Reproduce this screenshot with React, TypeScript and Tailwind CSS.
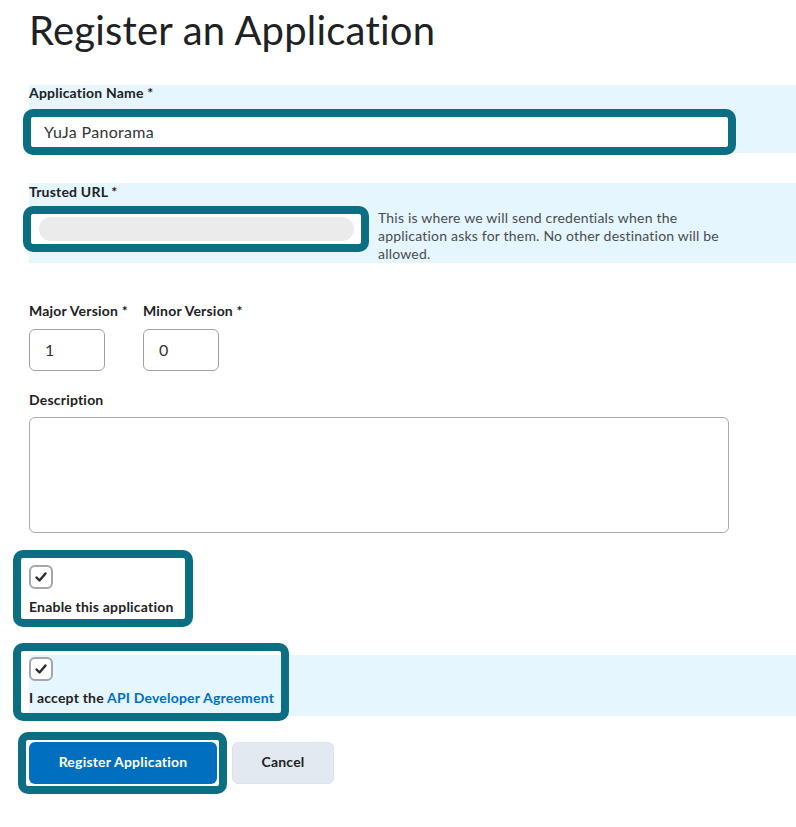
function Callout({ className }: { className: string }) {
  // teal annotation frame drawn over the control it highlights
  return (
    <span
      className={`pointer-events-none absolute rounded-[10px] border-[8px] border-[#0c6e82] ${className}`}
    />
  );
}

function Check() {
  return (
    <div className="flex h-[24px] w-[24px] items-center justify-center rounded-[6px] border-2 border-[#a3a6a9] bg-white">
      <svg width="16" height="16" viewBox="0 0 16 16" fill="none">
        <path
          d="M3.5 8.5l3 3L12.5 4.5"
          stroke="#2a2b2d"
          strokeWidth="2.4"
          strokeLinecap="round"
          strokeLinejoin="round"
        />
      </svg>
    </div>
  );
}

export default function App() {
  return (
    <div className="min-h-screen bg-white font-['Lato','Noto_Sans',sans-serif] text-[#202122]">
      <div className="pl-[29px]">
        <h1 className="mt-[6px] text-[40px] font-normal leading-[48px] tracking-[0.2px]">
          Register an Application
        </h1>

        {/* Application name */}
        <div className="mt-[31px] bg-[#e6f6fe] pb-[4px]">
          <label className="block text-[14px] font-bold leading-[16px] pb-[2px] tracking-[0.2px]">Application Name *</label>
          <div className="relative mt-[12px] h-[34px] w-[700px]">
            <div className="flex h-full items-center bg-white pl-[15px] text-[16px] tracking-[0.3px] text-[#333]">
              YuJa Panorama
            </div>
            <Callout className="-top-[6px] -left-[6px] -right-[7px] -bottom-[6px]" />
          </div>
        </div>

        {/* Trusted URL */}
        <div className="mt-[30px] bg-[#e6f6fe]">
          <label className="block text-[14px] font-bold leading-[18px] tracking-[0.2px]">Trusted URL *</label>
          <div className="mt-[8px] flex items-start">
            <div className="relative mt-[3px] h-[34px] w-[334px]">
              <div className="h-full bg-white pt-[5px] pl-[10px]">
                <div className="h-[24px] w-[315px] rounded-full bg-[#ebebeb]" />
              </div>
              <Callout className="-inset-[6px]" />
            </div>
            <p className="ml-[15px] w-[355px] text-[14px] leading-[18px] tracking-[0.2px] text-[#494c4e]">
              This is where we will send credentials when the application asks for them. No other destination will be allowed.
            </p>
          </div>
        </div>

        {/* Versions */}
        <div className="mt-[39px] flex">
          <div className="w-[114px]">
            <label className="block text-[14px] font-bold leading-[18px] tracking-[0.2px]">Major Version *</label>
            <div className="mt-[9px] flex h-[42px] w-[76px] items-center rounded-[6px] border border-[#9ea2a5] pl-[15px] text-[16px] text-[#333]">
              1
            </div>
          </div>
          <div>
            <label className="block text-[14px] font-bold leading-[18px] tracking-[0.2px]">Minor Version *</label>
            <div className="mt-[9px] flex h-[42px] w-[76px] items-center rounded-[6px] border border-[#9ea2a5] pl-[15px] text-[16px] text-[#333]">
              0
            </div>
          </div>
        </div>

        {/* Description */}
        <div className="mt-[20px]">
          <label className="block text-[14px] font-bold leading-[18px] tracking-[0.2px]">Description</label>
          <div className="mt-[8px] h-[116px] w-[700px] rounded-[6px] border border-[#a8abae]" />
        </div>

        {/* Enable */}
        <div className="relative mt-[32px] w-[150px]">
          <Check />
          <div className="mt-[9px] whitespace-nowrap text-[14px] font-bold leading-[18px] tracking-[0.2px]">
            Enable this application
          </div>
          <Callout className="-top-[15px] -left-[16px] -right-[14px] -bottom-[11px]" />
        </div>

        {/* Agreement */}
        <div className="mt-[39px] bg-[#e6f6fe] pt-[2px] pb-[9px]">
          <div className="relative w-[246px]">
            <Check />
            <div className="mt-[8px] whitespace-nowrap text-[14px] font-bold leading-[18px] tracking-[0.2px]">
              I accept the <span className="text-[#006fbf]">API Developer Agreement</span>
            </div>
            <Callout className="-top-[14px] -left-[16px] -right-[14px] -bottom-[14px]" />
          </div>
        </div>

        {/* Buttons */}
        <div className="mt-[26px] flex gap-[15px]">
          <div className="relative">
            <button className="h-[42px] w-[188px] rounded-[6px] bg-[#006fbf] pb-[3px] text-[14px] font-bold tracking-[0.2px] text-white">
              Register Application
            </button>
            <Callout className="-top-[10px] -left-[11px] -right-[10px] -bottom-[10px]" />
          </div>
          <button className="h-[42px] w-[102px] rounded-[6px] border border-[#dde3ea] bg-[#e3e9f1] pb-[3px] text-[14px] font-bold tracking-[0.2px] text-[#202122]">
            Cancel
          </button>
        </div>
      </div>
    </div>
  );
}
